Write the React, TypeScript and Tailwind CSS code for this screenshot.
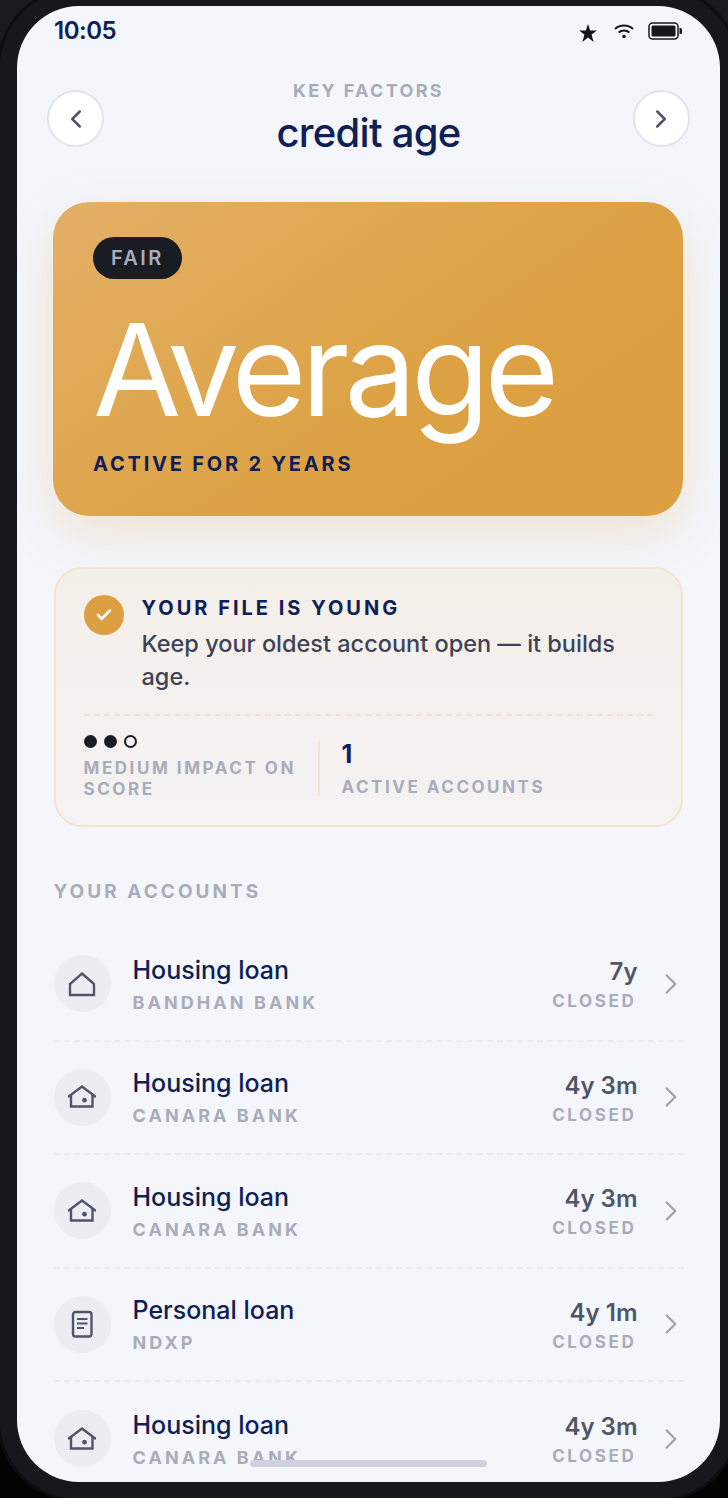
import React from 'react';
import { ChevronLeft, ChevronRight, Check } from 'lucide-react';

type Kind = 'plain' | 'house' | 'doc';

const accounts: { kind: Kind; title: string; bank: string; age: string }[] = [
  { kind: 'plain', title: 'Housing loan', bank: 'BANDHAN BANK', age: '7y' },
  { kind: 'house', title: 'Housing loan', bank: 'CANARA BANK', age: '4y 3m' },
  { kind: 'house', title: 'Housing loan', bank: 'CANARA BANK', age: '4y 3m' },
  { kind: 'doc', title: 'Personal loan', bank: 'NDXP', age: '4y 1m' },
  { kind: 'house', title: 'Housing loan', bank: 'CANARA BANK', age: '4y 3m' },
];

function AccountIcon({ kind }: { kind: Kind }) {
  if (kind === 'plain') {
    return <svg width="28" height="28" viewBox="0 0 28 28" fill="none" stroke="#50566a" strokeWidth="2.4">
        <path d="M14 3.5 26 14v11H2V14z" strokeLinejoin="miter" />
      </svg>;
  }
  if (kind === 'house') {
    return <svg width="28" height="28" viewBox="0 0 28 28" fill="none" stroke="#50566a" strokeWidth="2.4">
        <path d="M0 14 14 3.500l14 10.500" />
        <path d="M3 12v11.500h21.500V12" />
        <circle cx="16.500" cy="17.200" r="2.400" fill="#50566a" stroke="none" />
      </svg>;
  }
  return <svg width="28" height="28" viewBox="0 0 28 28" fill="none" stroke="#50566a" strokeWidth="2.4">
      <rect x="5" y="2" width="18.500" height="24.500" rx="2.500" />
      <path d="M9 9h10.500M9 13.500h10.500M9 18h7" strokeWidth="1.900" />
    </svg>;
}

function StatusIcons() {
  return <div className="flex items-center">
      <svg width="18" height="18" viewBox="0 0 18 18" fill="#16171c" className="mt-[3px] mr-[17px]">
        <path d="M9 0 11.200 6.600H18L12.600 10.600 14.600 18 9 13.600 3.400 18 5.400 10.600 0 6.600H6.800z" />
      </svg>
      <svg width="20" height="16" viewBox="0 0 20 16" fill="none" stroke="#16171c" strokeWidth="2" className="mr-[14px]">
        <path d="M1 6c5-4.600 13-4.600 18 0" />
        <path d="M4.600 9.500c3-2.600 7.800-2.600 10.800 0" />
        <circle cx="10" cy="13.500" r="1.800" fill="#16171c" stroke="none" />
      </svg>
      <svg width="34" height="18" viewBox="0 0 34 18" fill="none">
        <rect x="1" y="1" width="29" height="16" rx="3.500" stroke="#16171c" strokeWidth="1.500" />
        <rect x="3.500" y="3.500" width="24" height="11" rx="1.500" fill="#16171c" />
        <path d="M31.500 6h1a1.500 1.500 0 0 1 1.500 1.500v3a1.500 1.500 0 0 1-1.500 1.500h-1z" fill="#16171c" />
      </svg>
    </div>;
}

export default function App() {
  return <div className="w-[728px] h-[1498px] overflow-hidden bg-gradient-to-b from-[#1a1b21] to-[#030304] pt-[6px] pl-[17px] font-['Inter',sans-serif]">
      <div className="relative w-[703px] h-[1476px] rounded-[62px] bg-[#f4f6fc] overflow-hidden shadow-[0_0_0_17px_#17181d,0_0_0_20px_#0c0d10]">
        {/* Status bar */}
        <div className="flex items-center justify-between h-[50px] pl-[37px] pr-[38px]">
          <span className="text-[24px] leading-none font-semibold text-[#0f2056] tracking-[-0.02em]">
            10:05
          </span>
          <StatusIcons />
        </div>

        {/* Header */}
        <div className="flex items-center justify-between mt-[16px] pl-[30px] pr-[30px] h-[92px]">
          <button className="w-[57px] h-[57px] mt-[1px] rounded-full bg-white border-2 border-[#e2e4ec] flex items-center justify-center text-[#50566a]">
            <ChevronLeft size={30} strokeWidth={2} />
          </button>
          <div className="flex flex-col items-center mb-[1px]">
            <span className="text-[18px] leading-[24px] font-bold tracking-[0.13em] text-[#a8acbb]">
              KEY FACTORS
            </span>
            <span className="mt-[7px] text-[40px] leading-[46px] font-[450] tracking-[-0.018em] text-[#0f2056]">
              credit age
            </span>
          </div>
          <button className="w-[57px] h-[57px] mt-[1px] rounded-full bg-white border-2 border-[#e2e4ec] flex items-center justify-center text-[#50566a]">
            <ChevronRight size={30} strokeWidth={2} />
          </button>
        </div>

        <div className="px-[36.5px]">
          {/* Score card */}
          <div className="mt-[38px] -ml-[0.5px] w-[630px] h-[314px] rounded-[36px] bg-[linear-gradient(145deg,#e4b066_0%,#dca143_60%,#dca042_100%)] shadow-[0_18px_50px_rgba(220,160,66,0.22)] pt-[35px] pl-[40px]">
            <span className="inline-flex items-center h-[42px] px-[18px] rounded-full bg-[#1a1c23] text-[20px] font-semibold tracking-[0.12em] text-[#a8acbb]">
              FAIR
            </span>
            <div className="mt-[21px] text-[128px] leading-[140px] font-normal text-white tracking-[-0.04em]">
              Average
            </div>
            <div className="mt-[10px] text-[20px] leading-[28px] font-bold tracking-[0.14em] text-[#0f2056]">
              ACTIVE FOR 2 YEARS
            </div>
          </div>

          {/* Insight card */}
          <div className="mt-[51px] w-[629px] h-[260px] rounded-[28px] border-2 border-[#f3e4d0] bg-gradient-to-b from-[#f5efe9] to-[#f4f2f3] pt-[26px] px-[28px]">
            <div className="flex">
              <div className="w-[40px] h-[40px] rounded-full bg-[#dca042] flex items-center justify-center text-white">
                <Check size={18} strokeWidth={3.5} />
              </div>
              <div className="ml-[18px] flex-1">
                <div className="text-[20px] leading-[26px] font-bold tracking-[0.15em] text-[#0f2056]">
                  YOUR FILE IS YOUNG
                </div>
                <p className="mt-[6px] text-[23.5px] leading-[33px] font-[450] text-[#3f4356]">
                  Keep your oldest account open — it builds age.
                </p>
              </div>
            </div>
            <div className="mt-[21px] border-t-2 border-dashed border-[#f5e1d6]" />
            <div className="flex mt-[19px]">
              <div className="w-[234px] shrink-0 pr-[8px]">
                <div className="flex gap-[7px]">
                  <span className="w-[13px] h-[13px] rounded-full bg-[#1a1c23]" />
                  <span className="w-[13px] h-[13px] rounded-full bg-[#1a1c23]" />
                  <span className="w-[13px] h-[13px] rounded-full border-2 border-[#1a1c23]" />
                </div>
                <div className="mt-[10px] text-[17px] leading-[21px] font-bold tracking-[0.15em] text-[#a8acbb]">
                  MEDIUM IMPACT ON SCORE
                </div>
              </div>
              <div className="w-[2px] h-[55px] mt-[6px] bg-[#f3e4d0]" />
              <div className="ml-[22px] mt-[5px]">
                <div className="text-[25px] leading-[28px] font-bold text-[#0f2056]">1</div>
                <div className="mt-[8px] text-[17px] leading-[22px] font-bold tracking-[0.148em] text-[#a8acbb]">
                  ACTIVE ACCOUNTS
                </div>
              </div>
            </div>
          </div>

          {/* Accounts */}
          <div className="mt-[53px] text-[19px] leading-[24px] font-bold tracking-[0.16em] text-[#a8acbb]">
            YOUR ACCOUNTS
          </div>
          <div className="mt-[24px]">
            {accounts.map((account, index) => <div key={index} className={index < accounts.length - 1 ? 'flex items-center h-[113.5px] border-b-2 border-dashed border-[#eaecf3]' : 'flex items-center h-[113.5px]'}>
                <div className="w-[57px] h-[57px] rounded-full bg-[#ecedf2] flex items-center justify-center shrink-0">
                  <AccountIcon kind={account.kind} />
                </div>
                <div className="ml-[22px] flex-1 pt-[3px]">
                  <div className="text-[25px] leading-[32px] font-medium text-[#0f2056]">
                    {account.title}
                  </div>
                  <div className="mt-[3px] text-[18px] leading-[28px] font-bold tracking-[0.17em] text-[#a8acbb]">
                    {account.bank}
                  </div>
                </div>
                <div className="flex flex-col items-end pt-[2px]">
                  <div className="text-[24px] leading-[32px] font-semibold text-[#50566a]">
                    {account.age}
                  </div>
                  <div className="mt-[1px] pr-[1px] text-[17px] leading-[24px] font-bold tracking-[0.155em] text-[#a8acbb]">
                    CLOSED
                  </div>
                </div>
                <ChevronRight size={34} strokeWidth={1.7} className="ml-[16px] -mr-[4px] text-[#a0a4b3]" />
              </div>)}
          </div>
        </div>

        {/* Home indicator */}
        <div className="absolute left-[233px] bottom-[15px] w-[237px] h-[7px] rounded-full bg-[#cfd1e0]" />
      </div>
    </div>;
}
